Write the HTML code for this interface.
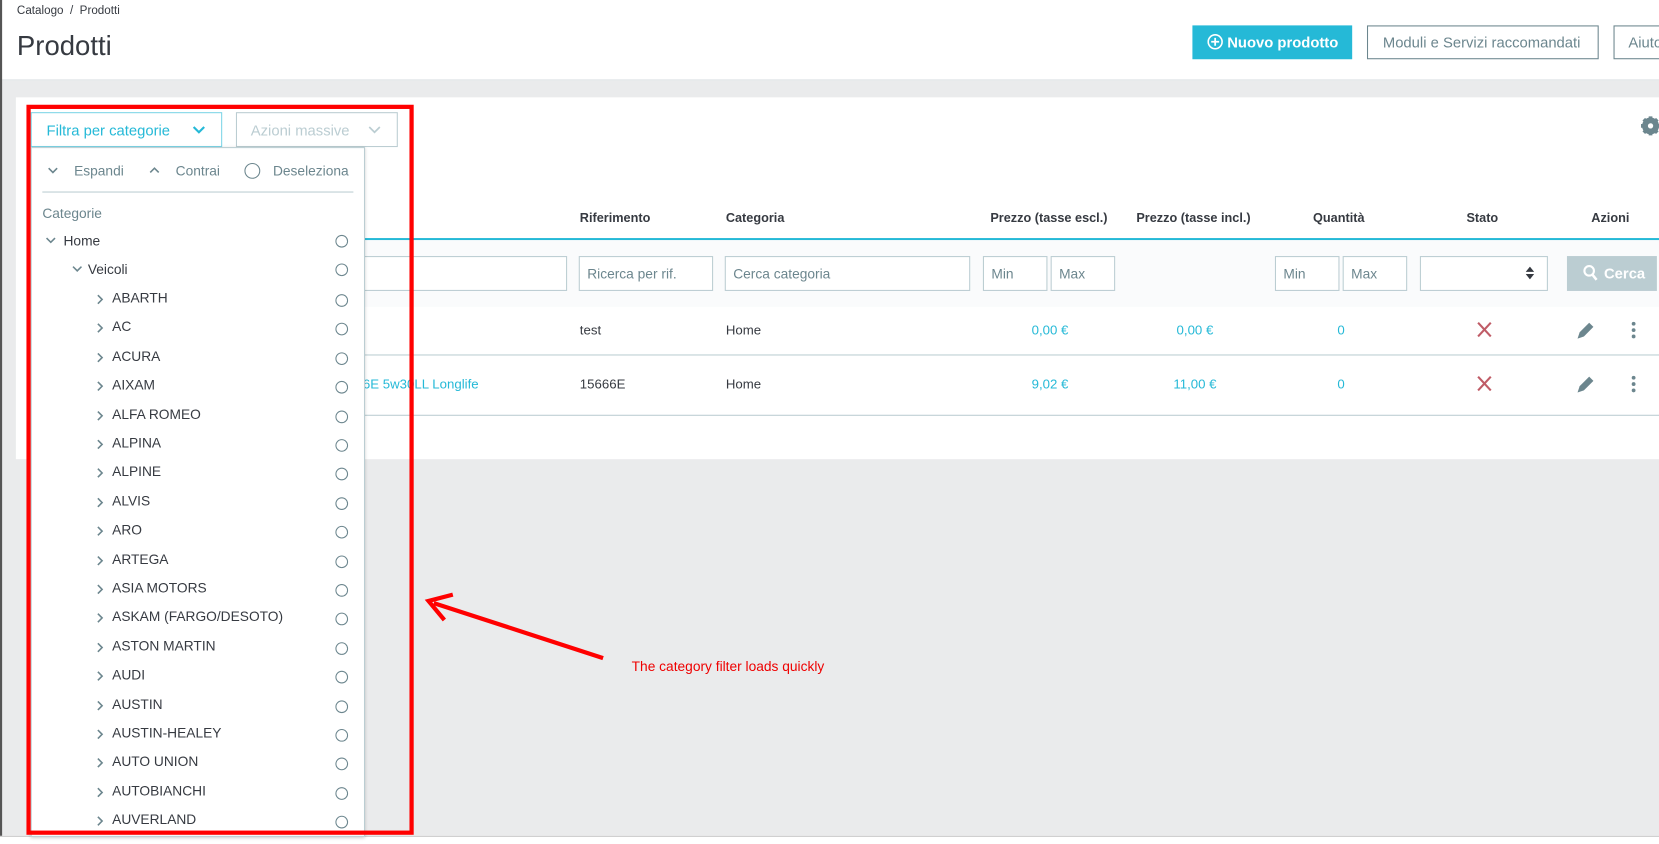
<!DOCTYPE html>
<html><head><meta charset="utf-8"><style>
*{box-sizing:border-box;margin:0;padding:0}
html,body{width:1659px;height:844px;overflow:hidden;background:#fff}
#w{position:absolute;left:0;top:0;width:1568px;height:798px;transform:scale(1.05804);transform-origin:0 0;font-family:"Liberation Sans",sans-serif;color:#363a41;background:#eaebec}
.a{position:absolute}
.t{position:absolute;white-space:nowrap;font-size:12.5px}
.inp{position:absolute;height:33px;border:1px solid #bbcdd2;background:#fff;color:#6c868e;font-size:13px;padding:8px 7px}
.cat{position:absolute;font-size:13px;color:#6c868e;white-space:nowrap}
.rad{position:absolute;left:287px;width:12px;height:12px;border:1px solid #6c868e;border-radius:50%}
.h{font-weight:bold;font-size:12px;color:#363a41}
.blue{color:#25b9d7}
svg.c{position:absolute}
</style></head><body><div id="w">
<div class="a" style="left:0;top:0;width:1568px;height:76px;background:#fff;border-bottom:1px solid #dfe3e6"></div>
<div class="a" style="left:0;top:0;width:2px;height:798px;background:#555"></div>
<div class="t" style="left:16px;top:4px;font-size:11px">Catalogo &nbsp;/ &nbsp;Prodotti</div>
<div class="t" style="left:16px;top:28px;font-size:26px">Prodotti</div>
<div class="a" style="left:1127px;top:24px;width:151px;height:32px;background:#25b9d7;color:#fff;font-size:14px;font-weight:bold;padding:8px 0 0 14px;white-space:nowrap"><svg width="15" height="15" style="vertical-align:-2px" viewBox="0 0 16 16"><circle cx="8" cy="8" r="7" fill="none" stroke="#fff" stroke-width="1.6"/><path d="M8 4v8M4 8h8" stroke="#fff" stroke-width="1.8"/></svg> Nuovo prodotto</div>
<div class="a" style="left:1292px;top:24px;width:219px;height:32px;border:1px solid #6c868e;background:#fff;color:#6c868e;font-size:14px;padding:7px 0 0 14px;white-space:nowrap">Moduli e Servizi raccomandati</div>
<div class="a" style="left:1525px;top:24px;width:60px;height:32px;border:1px solid #6c868e;background:#fff;color:#6c868e;font-size:14px;padding:7px 0 0 13px">Aiuto</div>

<div class="a" style="left:15px;top:92px;width:1553px;height:342px;background:#fff"></div>
<div class="a" style="left:0;top:790px;width:1568px;height:8px;background:#fff;border-top:1px solid #ccc"></div>
<svg class="a" style="left:1550px;top:109px" width="20" height="20" viewBox="0 0 20 20"><circle cx="10" cy="10" r="6" fill="none" stroke="#6c868e" stroke-width="4"/><g stroke="#6c868e" stroke-width="3.5"><path d="M10 1v18M1 10h18M3.6 3.6l12.8 12.8M16.4 3.6L3.6 16.4"/></g><circle cx="10" cy="10" r="2.5" fill="#fff"/></svg>

<div class="a" style="left:29px;top:106px;width:181px;height:33px;border:1px solid #7cd5e7;background:#fff;color:#25b9d7;font-size:14px;padding:8px 0 0 14px;white-space:nowrap">Filtra per categorie</div>
<svg class="c" style="left:182px;top:118px" width="12" height="9" viewBox="0 0 12 9"><path d="M1 2l5 5 5-5" fill="none" stroke="#25b9d7" stroke-width="2"/></svg>
<div class="a" style="left:223px;top:106px;width:153px;height:33px;border:1px solid #bbcdd2;color:#bbcdd2;font-size:14px;padding:8px 0 0 13px;white-space:nowrap">Azioni massive</div>
<svg class="c" style="left:348px;top:118px" width="12" height="9" viewBox="0 0 12 9"><path d="M1 2l5 5 5-5" fill="none" stroke="#bbcdd2" stroke-width="1.6"/></svg>

<!-- table -->
<div class="t h" style="left:548px;top:199px">Riferimento</div>
<div class="t h" style="left:686px;top:199px">Categoria</div>
<div class="t h" style="left:936px;top:199px">Prezzo (tasse escl.)</div>
<div class="t h" style="left:1074px;top:199px">Prezzo (tasse incl.)</div>
<div class="t h" style="left:1241px;top:199px">Quantità</div>
<div class="t h" style="left:1386px;top:199px">Stato</div>
<div class="t h" style="left:1504px;top:199px">Azioni</div>
<div class="a" style="left:340px;top:225px;width:1228px;height:2px;background:#25b9d7"></div>
<div class="a" style="left:340px;top:227px;width:1228px;height:63px;background:#fafbfc"></div>
<div class="inp" style="left:330px;top:242px;width:206px"></div>
<div class="inp" style="left:547px;top:242px;width:127px">Ricerca per rif.</div>
<div class="inp" style="left:685px;top:242px;width:232px">Cerca categoria</div>
<div class="inp" style="left:929px;top:242px;width:61px">Min</div>
<div class="inp" style="left:993px;top:242px;width:61px">Max</div>
<div class="inp" style="left:1205px;top:242px;width:61px">Min</div>
<div class="inp" style="left:1269px;top:242px;width:61px">Max</div>
<div class="inp" style="left:1342px;top:242px;width:121px"></div>
<svg class="c" style="left:1442px;top:252px" width="8" height="12" viewBox="0 0 8 12"><path d="M4 0L8 5H0zM4 12L0 7h8z" fill="#363a41"/></svg>
<div class="a" style="left:1481px;top:242px;width:85px;height:33px;background:#bbcdd2;color:#fff;font-weight:bold;font-size:14px;padding:8px 0 0 35px">Cerca</div>
<svg class="c" style="left:1496px;top:250px" width="14" height="16" viewBox="0 0 14 16"><circle cx="6" cy="6" r="4.5" fill="none" stroke="#fff" stroke-width="2"/><path d="M9 9.5l4 5" stroke="#fff" stroke-width="2.4"/></svg>
<div class="a" style="left:340px;top:335px;width:1228px;height:1px;background:#bbcdd2"></div>
<div class="a" style="left:340px;top:392px;width:1228px;height:1px;background:#bbcdd2"></div>
<div class="t" style="left:548px;top:305px">test</div>
<div class="t" style="left:686px;top:305px">Home</div>
<div class="t blue" style="left:975px;top:305px">0,00 €</div>
<div class="t blue" style="left:1112px;top:305px">0,00 €</div>
<div class="t blue" style="left:1264px;top:305px">0</div>
<div class="t blue" style="left:343px;top:356px">6E 5w30LL Longlife</div>
<div class="t" style="left:548px;top:356px">15666E</div>
<div class="t" style="left:686px;top:356px">Home</div>
<div class="t blue" style="left:975px;top:356px">9,02 €</div>
<div class="t blue" style="left:1109px;top:356px">11,00 €</div>
<div class="t blue" style="left:1264px;top:356px">0</div>
<svg class="a" style="left:0;top:0" width="1568" height="798">
<g stroke="#c05c67" stroke-width="2"><path d="M1397 305l12 13M1409 305l-12 13M1397 356l12 13M1409 356l-12 13"/></g>
<g fill="#6c868e"><path d="M1491 320l2-6 9-9 4 4-9 9z"/><path d="M1491 371l2-6 9-9 4 4-9 9z"/>
<circle cx="1544" cy="306" r="1.8"/><circle cx="1544" cy="312" r="1.8"/><circle cx="1544" cy="318" r="1.8"/>
<circle cx="1544" cy="357" r="1.8"/><circle cx="1544" cy="363" r="1.8"/><circle cx="1544" cy="369" r="1.8"/></g>
</svg>

<!-- dropdown -->
<div class="a" style="left:29px;top:139px;width:316px;height:652px;background:#fff;border:1px solid #bbcdd2;box-shadow:0 1px 3px rgba(0,0,0,.2)">
<svg class="c" style="left:15px;top:18px" width="10" height="7" viewBox="0 0 10 7"><path d="M1 1l4 4 4-4" fill="none" stroke="#6c868e" stroke-width="1.5"/></svg>
<div class="cat" style="left:40px;top:14px">Espandi</div>
<svg class="c" style="left:111px;top:17px" width="10" height="7" viewBox="0 0 10 7"><path d="M1 6l4-4 4 4" fill="none" stroke="#6c868e" stroke-width="1.5"/></svg>
<div class="cat" style="left:136px;top:14px">Contrai</div>
<div class="a" style="left:201px;top:14px;width:15px;height:15px;border:1.5px solid #6c868e;border-radius:50%"></div>
<div class="cat" style="left:228px;top:14px">Deseleziona</div>
<div class="a" style="left:10px;top:41px;width:294px;height:1px;background:#bbcdd2"></div>
<div class="cat" style="left:10px;top:54px">Categorie</div>
<svg class="c" style="left:13px;top:84px" width="10" height="7" viewBox="0 0 10 7"><path d="M1 1l4 4 4-4" fill="none" stroke="#6c868e" stroke-width="1.5"/></svg>
<div class="cat" style="left:30px;top:80px;color:#363a41">Home</div><div class="rad" style="top:82px"></div>
<svg class="c" style="left:38px;top:111px" width="10" height="7" viewBox="0 0 10 7"><path d="M1 1l4 4 4-4" fill="none" stroke="#6c868e" stroke-width="1.5"/></svg>
<div class="cat" style="left:53px;top:107px;color:#363a41">Veicoli</div><div class="rad" style="top:109px"></div>
<div id="list"></div>
</div>

<!-- annotation -->
<div class="a" style="left:25px;top:99px;width:366px;height:690px;border:4px solid #f00"></div>
<svg class="a" style="left:0;top:0" width="1568" height="798"><path d="M570 622L410 570" stroke="#f00" stroke-width="4" fill="none"/><path d="M428 562L405 568L420 586" stroke="#f00" stroke-width="4" fill="none"/></svg>
<div class="t" style="left:597px;top:622px;color:#e00;font-size:13px">The category filter loads quickly</div>
</div>
<script>
var n=["ABARTH","AC","ACURA","AIXAM","ALFA ROMEO","ALPINA","ALPINE","ALVIS","ARO","ARTEGA","ASIA MOTORS","ASKAM (FARGO/DESOTO)","ASTON MARTIN","AUDI","AUSTIN","AUSTIN-HEALEY","AUTO UNION","AUTOBIANCHI","AUVERLAND"],h="";
n.forEach(function(s,i){var y=134+i*27.4;h+='<svg class="c" style="left:61px;top:'+(y+4)+'px" width="7" height="10" viewBox="0 0 7 10"><path d="M1.5 1l4 4-4 4" fill="none" stroke="#6c868e" stroke-width="1.5"/></svg><div class="cat" style="left:76px;top:'+y+'px;color:#363a41">'+s+'</div><div class="rad" style="top:'+(y+4)+'px"></div>';});
document.getElementById('list').outerHTML=h;
</script>
</body></html>
